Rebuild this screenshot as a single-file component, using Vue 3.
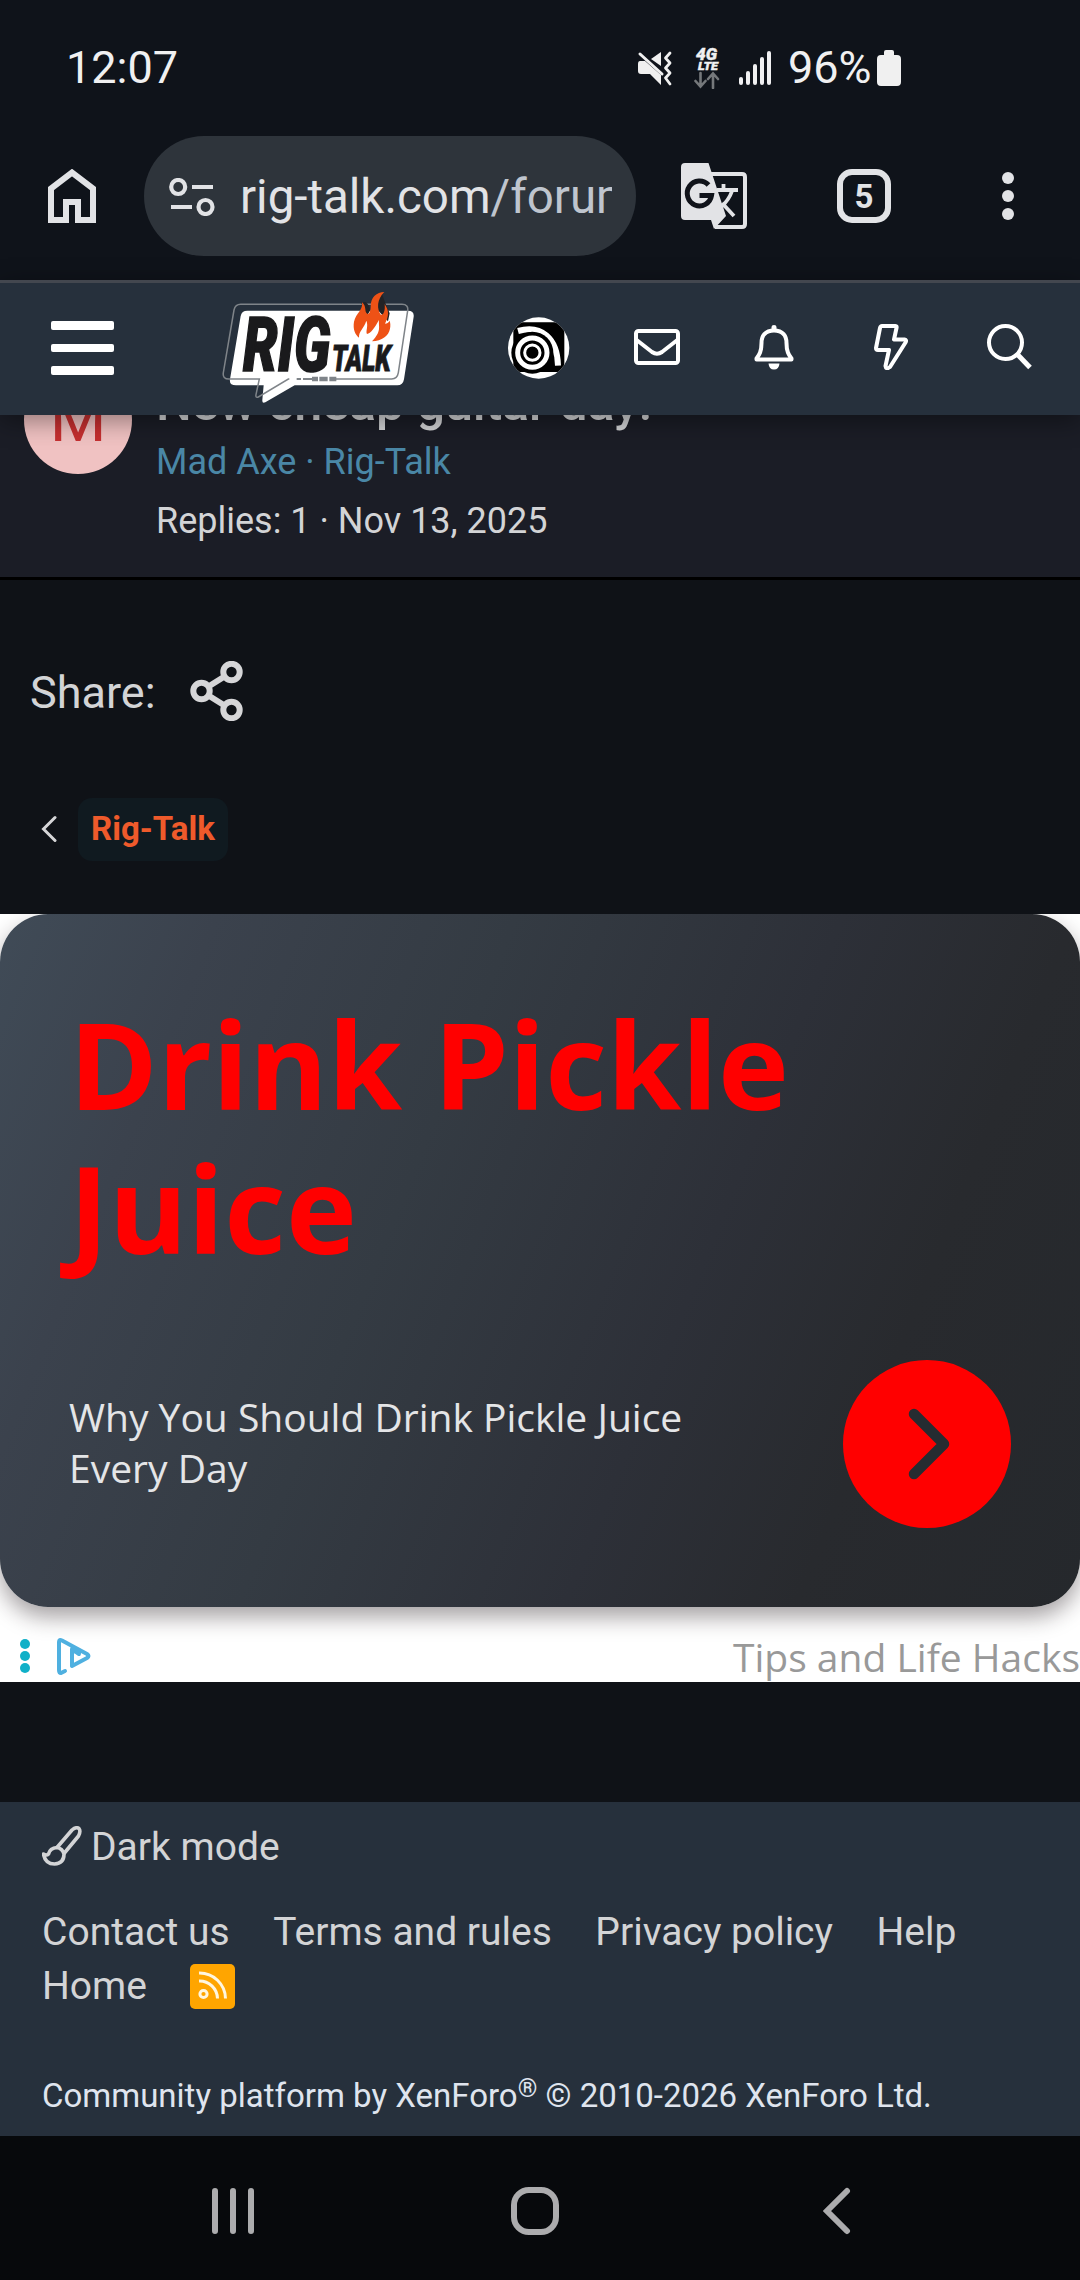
<script setup>
const footerLinks = ['Contact us', 'Terms and rules', 'Privacy policy', 'Help', 'Home']
const signalBars = [8, 14, 21, 28, 34]
</script>

<template>
  <div class="screen">
    <div class="status">
      <span class="time">12:07</span>
      <svg class="mute" width="36" height="36" viewBox="0 0 36 36">
        <path d="M24 2V16L14 9Z" fill="#f0f0f0" />
        <path d="M3 11H8L24 25V35L13 24H4Q1 24 1 21V14Q1 11 3 11Z" fill="#f0f0f0" />
        <path d="M3 4L25 24" stroke="#f0f0f0" stroke-width="3" stroke-linecap="round" />
        <path d="M33 3L28.500 8L33 13L28.500 18L33 23L28.500 28L33 34" fill="none" stroke="#f0f0f0" stroke-width="2.800" stroke-linejoin="round" stroke-linecap="round" />
      </svg>
      <svg class="lte" width="28" height="42" viewBox="0 0 28 42">
        <text x="3" y="13" class="lte-a" textLength="21" lengthAdjust="spacingAndGlyphs">4G</text>
        <text x="5" y="23" class="lte-b" textLength="20" lengthAdjust="spacingAndGlyphs">LTE</text>
        <path d="M7.500 26V39M2.500 34L7.500 39.500L12.500 34M20 41V27M15 32L20 26.500L25 32" fill="none" stroke="#75787b" stroke-width="2.600" stroke-linecap="round" />
      </svg>
      <div class="signal">
        <i v-for="h in signalBars" :key="h" :style="{ height: h + 'px' }"></i>
      </div>
      <span class="percent">96%</span>
      <svg class="battery" width="24" height="36" viewBox="0 0 24 36">
        <path d="M7 2Q7 0 9 0H15Q17 0 17 2V5H20Q24 5 24 9V32Q24 36 20 36H4Q0 36 0 32V9Q0 5 4 5H7Z" fill="#f0f0f0" />
      </svg>
    </div>

    <div class="toolbar">
      <svg class="home" width="48" height="54" viewBox="0 0 48 54">
        <path d="M3 51V19.500L24 3.500L45 19.500V51H30V33H18V51Z" fill="none" stroke="#e2e3e6" stroke-width="6" />
      </svg>
      <div class="pill">
        <svg width="46" height="38" viewBox="0 0 46 38">
          <g fill="none" stroke="#e2e3e6" stroke-width="4.200">
            <circle cx="9.200" cy="9" r="7" />
            <circle cx="36.500" cy="29" r="7" />
            <path d="M23 9H44M2 29H23" />
          </g>
        </svg>
        <span class="url">rig-talk.com<em>/forums</em></span>
      </div>
      <svg class="translate" width="66" height="66" viewBox="0 0 66 66">
        <path d="M30 11H61Q64 11 64 14V61Q64 64 61 64H34" fill="none" stroke="#e2e3e6" stroke-width="4" />
        <path d="M4 0H27.500L45 53L33 66L30 57H4Q0 57 0 53V4Q0 0 4 0Z" fill="#e2e3e6" />
        <path d="M27.500 22A12.200 12.500 0 1 0 30.500 32.500H18.500" fill="none" stroke="#10131a" stroke-width="5" />
        <path d="M36 27H57M42.500 21V27M51 28Q48 37 40 44M41 40L53 53" fill="none" stroke="#e2e3e6" stroke-width="3.800" />
      </svg>
      <div class="tabs">5</div>
      <div class="dots"><i></i><i></i><i></i></div>
    </div>

    <header class="header">
      <div class="burger"><i></i><i></i><i></i></div>
      <svg class="logo" width="197" height="115" viewBox="60 30 591 345">
        <path d="M142 92H624Q643 92 641 110L612 298Q609 316 592 316H284L196 367Q186 372 187 360L191 316H108Q87 316 90 298L122 108Q125 92 142 92Z" fill="#fff" />
        <path d="M300 297H265L175 351Q166 355 168 344L178 297H87Q67 297 70 278L102 90Q106 73 122 73H606Q626 73 623 92L595 278Q592 297 575 297H405" fill="none" stroke="#7f8489" stroke-width="4.500" />
        <path d="M268 296.500H300" fill="none" stroke="#fff" stroke-width="7" />
        <path d="M290 297H303M309 297H336" stroke="#7f8489" stroke-width="6" />
        <path d="M336 297H354M358 297H383M388 297H409" stroke="#7f8489" stroke-width="13" />
        <text x="129" y="274" class="rig" textLength="262" lengthAdjust="spacingAndGlyphs">RIG</text>
        <text x="396" y="273" class="talk" textLength="176" lengthAdjust="spacingAndGlyphs">TALK</text>
        <path d="M484 68L496 66Q509 74 510 92L502 106L492 98Z M546 42L530 62L528 84L546 104L564 124L569 100L558 74Z" fill="#232326" />
        <path d="M553 36C530 36 512 52 512 78C512 96 507 106 500 100C493 92 500 78 486 67C490 90 468 100 462 125C458 148 466 164 477 173C476 152 492 146 499 122C506 138 496 154 501 162C512 160 524 144 537 120C535 142 546 152 516 184C546 182 566 168 570 146C572 136 571 128 569 122C566 128 561 131 555 131C566 108 569 94 554 72C556 92 551 104 543 105C530 88 530 58 553 36Z" fill="#ee5216" />
      </svg>
      <svg class="user" width="62" height="62" viewBox="24 34 186 186">
        <defs><clipPath id="round"><circle cx="116" cy="127" r="92" /></clipPath></defs>
        <g clip-path="url(#round)">
          <rect x="20" y="30" width="194" height="194" fill="#fff" />
          <rect x="40" y="50" width="153" height="149" rx="14" fill="#000" />
          <path d="M54 76C124 56 172 98 174 180" fill="none" stroke="#fff" stroke-width="18" />
          <circle cx="97" cy="141" r="63" fill="#000" />
          <circle cx="97" cy="141" r="44" fill="none" stroke="#fff" stroke-width="15" />
          <circle cx="97" cy="141" r="23" fill="none" stroke="#fff" stroke-width="9" />
        </g>
      </svg>
      <svg class="mail" width="46" height="36" viewBox="0 0 46 36">
        <g fill="none" stroke="#fff" stroke-width="4">
          <rect x="2" y="2" width="42" height="32" rx="2.500" />
          <path d="M2 10.500L18 23Q23 26.500 28 23L44 10.500" />
        </g>
      </svg>
      <svg class="bell" width="40" height="46" viewBox="0 0 40 46">
        <path d="M20 6.500C11 6.500 7.500 12 7.500 19C7.500 28 5 31 2.500 34.500V35.500H37.500V34.500C35 31 32.500 28 32.500 19C32.500 12 29 6.500 20 6.500Z" fill="none" stroke="#fff" stroke-width="4" stroke-linejoin="round" />
        <path d="M17.500 6V3Q17.500 1 20 1T22.500 3V6ZM14.500 39.500H25.500Q25 45.500 20 45.500T14.500 39.500Z" fill="#fff" />
      </svg>
      <svg class="bolt" width="34" height="46" viewBox="0 0 34 46">
        <path d="M8 2H21.500Q23 2 22.500 4L20 15.500H30.500Q33 16 31.500 18.500L16 43Q12 46 11.500 42L15 26H4Q2 26 2 24L6 4Q6.500 2 8 2Z" fill="none" stroke="#fff" stroke-width="4" stroke-linejoin="round" />
      </svg>
      <svg class="search" width="46" height="46" viewBox="0 0 46 46">
        <circle cx="18.500" cy="18.500" r="16.500" fill="none" stroke="#fff" stroke-width="4" />
        <path d="M30 30L43 43.500" stroke="#fff" stroke-width="5" />
      </svg>
    </header>

    <section class="thread">
      <div class="avatar">M</div>
      <div class="info">
        <div class="title">New cheap guitar day!</div>
        <div class="meta link">Mad Axe · Rig-Talk</div>
        <div class="meta">Replies: 1 · Nov 13, 2025</div>
      </div>
    </section>

    <div class="share">
      <span>Share:</span>
      <svg width="54" height="60" viewBox="0 0 54 60">
        <g fill="none" stroke="#d6d6d8" stroke-width="6">
          <circle cx="41.500" cy="11" r="8.200" />
          <circle cx="11.500" cy="30" r="8.200" />
          <circle cx="41.500" cy="49" r="8.200" />
          <path d="M18.500 25.500L34.500 15.500M18.500 34.500L34.500 44.500" />
        </g>
      </svg>
    </div>

    <div class="crumbs">
      <svg width="16" height="28" viewBox="0 0 16 28">
        <path d="M14 2.500L2.500 14L14 25.500" fill="none" stroke="#d6d6d8" stroke-width="3" stroke-linecap="round" />
      </svg>
      <span class="chip">Rig-Talk</span>
    </div>

    <section class="ad">
      <div class="card">
        <h2>Drink Pickle<br />Juice</h2>
        <div class="row">
          <p>Why You Should Drink Pickle Juice<br />Every Day</p>
          <div class="go">
            <svg width="42" height="72" viewBox="0 0 42 72">
              <path d="M6 6L36 36L6 66" fill="none" stroke="#262c31" stroke-width="10.500" stroke-linecap="round" stroke-linejoin="round" />
            </svg>
          </div>
        </div>
      </div>
      <div class="strip">
        <div class="addots"><i></i><i></i><i></i></div>
        <svg width="36" height="38" viewBox="0 0 36 38">
          <g fill="none" stroke="#4fb0e0" stroke-width="4" stroke-linejoin="round" stroke-linecap="round">
            <path d="M9 34L5 36Q3 36 3 33V5Q3 2 6 3.500L31 17Q34 19 31 21L16 29V12L23 17" />
          </g>
        </svg>
        <span>Tips and Life Hacks</span>
      </div>
    </section>

    <footer class="footer">
      <div class="mode">
        <svg width="40" height="40" viewBox="0 0 40 40">
          <g fill="none" stroke="#d3d4d6" stroke-width="3.600" stroke-linejoin="round">
            <path d="M15 21.500L30 4Q34 0.500 37 2.500Q39 5 36.500 10L22 27.500" />
            <path d="M15 21.500Q20.500 22.500 22 28Q22 37.500 12.500 38Q3 38 1.500 28Q4.500 30 6.500 28Q8 22 15 21.500Z" />
          </g>
        </svg>
        <span>Dark mode</span>
      </div>
      <nav class="links">
        <a v-for="l in footerLinks" :key="l">{{ l }}</a>
        <svg width="45" height="45" viewBox="0 0 45 45">
          <rect width="45" height="45" rx="5" fill="#ffa500" />
          <g fill="none" stroke="#fff6e0" stroke-width="3">
            <circle cx="13.500" cy="30" r="3.600" />
            <path d="M9 17A18 18 0 0 1 27.500 34.500M9 9A26 26 0 0 1 35.500 34.500" />
          </g>
        </svg>
      </nav>
      <div class="copy">Community platform by XenForo<sup>®</sup> © 2010-2026 XenForo Ltd.</div>
    </footer>

    <div class="navbar">
      <svg class="recents" width="42" height="48" viewBox="0 0 42 48">
        <path d="M3 4V44M21 4V44M39 4V44" stroke="#acacae" stroke-width="6" stroke-linecap="round" />
      </svg>
      <svg class="homekey" width="48" height="48" viewBox="0 0 48 48">
        <rect x="3" y="3" width="42" height="42" rx="15" fill="none" stroke="#acacae" stroke-width="6" />
      </svg>
      <svg width="28" height="48" viewBox="0 0 28 48">
        <path d="M24 4L4 24L24 44" fill="none" stroke="#acacae" stroke-width="6" stroke-linecap="round" />
      </svg>
    </div>
  </div>
</template>

<style>
html,
body {
  margin: 0;
  background: #0f1216;
}
</style>

<style scoped>
.screen {
  width: 1080px;
  height: 2280px;
  overflow: hidden;
  background: #0f1217;
  font-family: Roboto, "Liberation Sans", sans-serif;
  color: #d3d4d6;
}
.screen * {
  box-sizing: border-box;
}
svg {
  display: block;
  flex: none;
}
span,
a {
  white-space: nowrap;
}
.status {
  height: 136px;
  display: flex;
  align-items: center;
  background: #0f131a;
  font-size: 45px;
  color: #f0f0f1;
}
.time {
  width: 637px;
  padding-left: 66px;
  margin-top: -2px;
}
.lte {
  margin-left: 20px;
}
.lte-a,
.lte-b {
  font-family: Roboto, sans-serif;
  font-weight: 900;
  font-style: italic;
  fill: #f0f0f1;
  stroke: #f0f0f1;
  stroke-width: 0.4px;
}
.lte-a {
  font-size: 16.5px;
}
.lte-b {
  font-size: 11.5px;
}
.signal {
  width: 32px;
  margin-left: 18px;
  display: flex;
  align-items: flex-end;
  justify-content: space-between;
}
.signal i {
  width: 4px;
  border-radius: 2px;
  background: #f0f0f1;
}
.percent {
  width: 87px;
  margin-left: 17px;
  margin-top: -2px;
}
.battery {
  margin-left: 2px;
}
.toolbar {
  height: 144px;
  padding-bottom: 24px;
  display: flex;
  align-items: center;
  background: #0f131a;
}
.home {
  margin-left: 48px;
}
.pill {
  width: 492px;
  height: 120px;
  margin-left: 48px;
  padding: 1px 24px 0 25px;
  display: flex;
  align-items: center;
  border-radius: 60px;
  background: #2e343b;
}
.url {
  width: 372px;
  margin-left: 25px;
  overflow: hidden;
  font-size: 47.5px;
  line-height: 70px;
  color: #e2e3e6;
}
.url em {
  font-style: normal;
  color: #bfc5ce;
}
.translate {
  margin-left: 45px;
}
.tabs {
  width: 54px;
  height: 54px;
  margin-left: 90px;
  border: 6px solid #e2e3e6;
  border-radius: 15px;
  color: #e2e3e6;
  font-size: 33px;
  font-weight: 700;
  line-height: 43px;
  text-align: center;
}
.dots {
  width: 12px;
  margin-left: 111px;
  display: grid;
  gap: 6px;
}
.dots i {
  height: 12px;
  border-radius: 50%;
  background: #e2e3e6;
}
.header {
  position: relative;
  z-index: 2;
  height: 135px;
  padding-bottom: 5px;
  border-top: 3px solid #43474f;
  display: flex;
  align-items: center;
  background: #26303c;
  box-shadow: 0 6px 24px rgba(0, 0, 0, 0.4);
}
.burger {
  width: 63px;
  margin-left: 51px;
  margin-top: 3px;
  display: grid;
  gap: 14px;
}
.burger i {
  height: 8.5px;
  border-radius: 2px;
  background: #fff;
}
.logo {
  margin-left: 106px;
  margin-top: 2px;
}
.rig,
.talk {
  font-family: Roboto, sans-serif;
  font-weight: 900;
  font-style: italic;
  fill: #1a1a1c;
  stroke: #1a1a1c;
}
.rig {
  font-size: 230px;
  stroke-width: 5px;
}
.talk {
  font-size: 113px;
  stroke-width: 3px;
}
.user {
  margin-left: 91px;
  margin-top: 2px;
}
.mail {
  margin-left: 64px;
}
.bell {
  margin-left: 74px;
}
.bolt {
  margin-left: 80px;
}
.search {
  margin-left: 79px;
}
.thread {
  height: 165px;
  padding: 0 24px;
  display: flex;
  gap: 24px;
  background: #1b1d26;
  border-bottom: 3px solid #000;
}
.avatar {
  width: 108px;
  height: 108px;
  margin-top: -49px;
  flex: none;
  border-radius: 50%;
  background: #f0c2c2;
  color: #c62f30;
  font-size: 65px;
  line-height: 106px;
  text-align: center;
}
.title {
  margin-top: -42px;
  font-size: 50.4px;
  font-weight: 500;
  letter-spacing: -0.15px;
  line-height: 60px;
  color: #d3d4d6;
  white-space: nowrap;
}
.meta {
  font-size: 36px;
  line-height: 59px;
}
.link {
  color: #4a87a6;
}
.share {
  height: 217px;
  padding: 7px 0 0 30px;
  display: flex;
  align-items: center;
  gap: 34px;
  font-size: 45px;
}
.share svg {
  margin-top: -2px;
}
.crumbs {
  height: 117px;
  padding: 1px 0 0 41px;
  display: flex;
  align-items: flex-start;
}
.crumbs svg {
  margin-top: 17px;
}
.chip {
  width: 150px;
  height: 63px;
  margin-left: 21px;
  border-radius: 14px;
  background: #101a20;
  color: #ef5a2b;
  font-size: 33px;
  font-weight: 700;
  line-height: 62px;
  text-align: center;
}
.ad {
  height: 768px;
  background: #fff;
  font-family: "Open Sans", "Noto Sans", sans-serif;
  overflow: hidden;
}
.card {
  height: 693px;
  padding: 78px 69px 0;
  border-radius: 48px;
  background: linear-gradient(112deg, #404b57 0%, #3b424d 16%, #343b43 38%, #2d3038 62%, #282a2e 79%, #25282c 100%);
  box-shadow: 0 10px 22px rgba(30, 20, 25, 0.4);
}
h2 {
  height: 368px;
  margin: 0;
  color: #f00;
  font-size: 120px;
  font-weight: 700;
  line-height: 144px;
}
.row {
  display: flex;
  justify-content: space-between;
  align-items: center;
}
p {
  margin: -4px 0 0;
  color: #e4e5e7;
  font-size: 39px;
  line-height: 51px;
}
.go {
  width: 168px;
  height: 168px;
  padding-left: 3px;
  border-radius: 50%;
  background: #f00;
  display: flex;
  align-items: center;
  justify-content: center;
}
.strip {
  height: 75px;
  padding: 22px 0 0 20px;
  display: flex;
  align-items: center;
  gap: 26px;
}
.addots {
  width: 10px;
  display: grid;
  gap: 2px;
}
.addots i {
  height: 10px;
  border-radius: 50%;
  background: #10b0c8;
}
.strip span {
  margin-left: auto;
  margin-top: 3px;
  color: #999;
  font-size: 39px;
  line-height: 50px;
}
.footer {
  height: 334px;
  margin-top: 120px;
  padding: 21px 42px 0;
  background: #26303c;
}
.mode {
  height: 82px;
  display: flex;
  gap: 9px;
  align-items: flex-start;
  font-size: 39px;
  line-height: 48px;
}
.mode svg {
  margin-top: 3px;
}
.links {
  display: flex;
  flex-wrap: wrap;
  column-gap: 43.5px;
  height: 166px;
  align-content: flex-start;
  font-size: 39px;
  line-height: 54px;
}
.links svg {
  margin-top: 5px;
}
.copy {
  font-size: 33px;
  line-height: 50px;
  color: #dfe4ee;
  white-space: nowrap;
}
sup {
  font-size: 25px;
  line-height: 0;
  vertical-align: 10px;
}
.navbar {
  height: 144px;
  padding-top: 5px;
  display: flex;
  align-items: center;
  background: #07090c;
}
.recents {
  margin-left: 212px;
}
.homekey {
  margin-left: 257px;
  margin-right: 264px;
}
</style>
